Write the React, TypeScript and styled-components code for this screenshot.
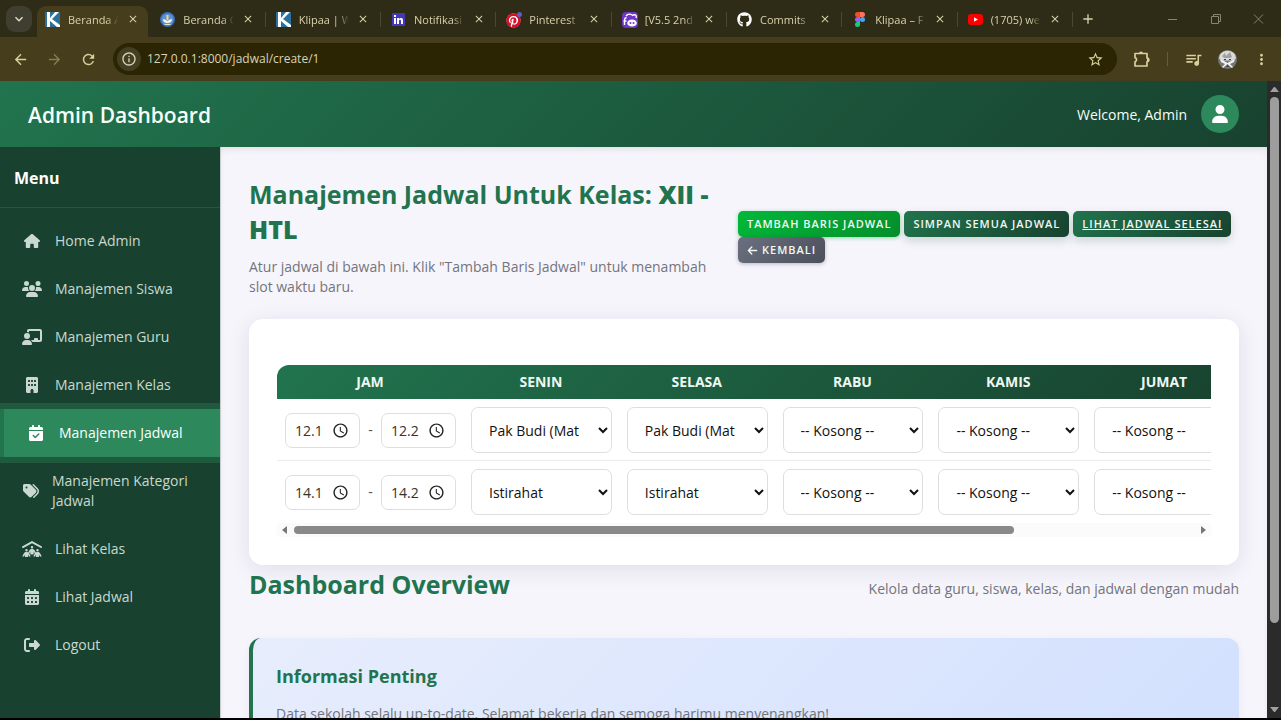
import React from "react";
import styled, { createGlobalStyle, css } from "styled-components";
import {
  FaHouse,
  FaUsers,
  FaChalkboardUser,
  FaBuilding,
  FaCalendarCheck,
  FaTags,
  FaPeopleRoof,
  FaCalendarDays,
  FaRightFromBracket,
  FaUser,
  FaArrowLeft,
  FaGithub,
  FaPinterest,
} from "react-icons/fa6";
import {
  MdArrowBack,
  MdArrowForward,
  MdRefresh,
  MdInfoOutline,
  MdStarBorder,
  MdQueueMusic,
  MdMoreVert,
  MdClose,
  MdAdd,
  MdKeyboardArrowDown,
  MdAccessTime,
} from "react-icons/md";

const green = "#21744e";
const dark = "#18422f";
const gradient = `linear-gradient(135deg, ${green} 0%, ${dark} 100%)`;

const Global = createGlobalStyle`
  * { box-sizing: border-box; }
  body {
    margin: 0;
    background: #000;
    font-family: "Open Sans", "Noto Sans", sans-serif;
    font-size: 14px;
    line-height: 20px;
  }
  button, input, select { font-family: inherit; }
  h1, h2, h3, p, ul { margin: 0; padding: 0; }
`;

const Shell = styled.div`
  display: flex;
  flex-direction: column;
  height: 100vh;
  padding-bottom: 2px;
  overflow: hidden;
`;

/* Browser frame */
const TabStrip = styled.div`
  display: flex;
  align-items: flex-end;
  flex: none;
  height: 37px;
  background: #2e2c16;
`;
const TabMenu = styled.button`
  display: grid;
  place-items: center;
  width: 26px;
  height: 26px;
  margin: 0 5px 5px 6px;
  padding: 0;
  border: 0;
  border-radius: 9px;
  background: #403e31;
  color: #e6e0bd;
  font-size: 16px;
`;
const Tabs = styled.div`
  display: flex;
  flex: 0 1 1038px;
  min-width: 0;
`;
const TabCell = styled.div`
  display: flex;
  align-items: center;
  flex: 1 1 0;
  min-width: 0;
  height: 31px;
`;
const TabBody = styled.div<{ $active?: boolean }>`
  display: flex;
  align-items: center;
  flex: 1;
  min-width: 0;
  height: 31px;
  padding: 0 8px;
  border-radius: 9px 9px 0 0;
  ${(p) =>
    p.$active &&
    css`
      background: #453d1b;
    `}
`;
const TabIcon = styled.span`
  display: grid;
  place-items: center;
  flex: none;
  width: 15px;
  height: 15px;
  margin: 0 8px 5px 0;
  font-size: 15px;
`;
const TabLabel = styled.span`
  flex: 1;
  min-width: 0;
  margin-bottom: 4px;
  overflow: hidden;
  white-space: nowrap;
  font-size: 11px;
  line-height: 16px;
  color: #d8d1ac;
  mask-image: linear-gradient(90deg, #000 68%, transparent 88%);
`;
const TabClose = styled.button`
  display: grid;
  place-items: center;
  flex: none;
  width: 15px;
  height: 15px;
  margin-bottom: 5px;
  padding: 0;
  border: 0;
  background: none;
  color: #d8d1ac;
  font-size: 12px;
`;
const TabDivider = styled.span<{ $hidden?: boolean }>`
  width: 1px;
  height: 15px;
  margin: 0 2px 5px 1px;
  background: ${(p) => (p.$hidden ? "transparent" : "#4c4632")};
`;
const NewTab = styled.button`
  display: grid;
  place-items: center;
  width: 26px;
  height: 26px;
  margin-bottom: 5px;
  padding: 0;
  border: 0;
  background: none;
  color: #d8d1ac;
  font-size: 16px;
`;
const WindowButtons = styled.div`
  display: flex;
  gap: 32px;
  margin: 0 17px 12px auto;
`;
const WindowButton = styled.button`
  display: grid;
  width: 11px;
  height: 12px;
  padding: 0;
  border: 0;
  background: none;
  color: #88836a;
`;
const Toolbar = styled.div`
  display: flex;
  align-items: center;
  flex: none;
  height: 44px;
  padding: 0 11px;
  background: #453d1b;
`;
const ToolButton = styled.button<{ $dim?: boolean }>`
  display: grid;
  place-items: center;
  flex: none;
  width: 18px;
  height: 26px;
  padding: 0;
  border: 0;
  background: none;
  color: ${(p) => (p.$dim ? "#857d52" : "#d8d19c")};
  font-size: 17px;
`;
const NavButtons = styled.div`
  display: flex;
  gap: 16px;
  margin-right: 16px;
`;
const AddressBar = styled.div`
  display: flex;
  align-items: center;
  flex: 1;
  min-width: 0;
  height: 32px;
  padding: 0 13px 0 4px;
  border-radius: 16px;
  background: #2b2504;
`;
const SiteInfo = styled.button`
  display: grid;
  place-items: center;
  flex: none;
  width: 24px;
  height: 24px;
  padding: 0;
  border: 0;
  border-radius: 50%;
  background: #443e22;
  color: #d9d3b8;
  font-size: 16px;
`;
const Address = styled.input`
  flex: 1;
  min-width: 0;
  padding: 0 6px;
  border: 0;
  outline: 0;
  background: none;
  color: #d9d3b8;
  font-size: 12px;
  line-height: 20px;
`;
const ToolRight = styled.div`
  display: flex;
  align-items: center;
  gap: 16px;
  margin-left: 16px;
`;
const ToolDivider = styled.span`
  width: 1px;
  height: 14px;
  background: #655d38;
`;

/* Page */
const Viewport = styled.div`
  display: flex;
  flex: 1;
  min-height: 0;
`;
const Page = styled.div`
  display: flex;
  flex-direction: column;
  flex: 1;
  min-width: 0;
`;
const Header = styled.header`
  display: flex;
  align-items: center;
  justify-content: space-between;
  flex: none;
  height: 66px;
  padding: 0 28px;
  background: ${gradient};
  color: #f4fff9;
`;
const Brand = styled.h1`
  padding-top: 2px;
  font-size: 21px;
  font-weight: 600;
  line-height: 30px;
`;
const Account = styled.div`
  display: flex;
  align-items: center;
  gap: 14px;
  font-weight: 500;
`;
const Welcome = styled.span`
  padding-top: 2px;
`;
const Avatar = styled.span`
  display: grid;
  place-items: center;
  width: 38px;
  height: 38px;
  border-radius: 50%;
  background: #2d895c;
  color: #fff;
  font-size: 18px;
`;
const Body = styled.div`
  display: flex;
  flex: 1;
  min-height: 0;
`;
const Sidebar = styled.nav`
  flex: none;
  width: 221px;
  overflow: hidden;
  border-right: 1px solid #c5cccb;
  background: ${dark};
  color: #c9d8d0;
`;
const MenuTitle = styled.h2`
  height: 61px;
  padding: 21px 14px 19px;
  border-bottom: 1px solid #2a5341;
  color: #fff;
  font-size: 16px;
  font-weight: 700;
  line-height: 20px;
`;
const MenuList = styled.ul`
  padding-top: 9px;
  list-style: none;
`;
const MenuLink = styled.a<{ $active?: boolean; $wide?: boolean }>`
  display: flex;
  align-items: center;
  gap: 13px;
  padding: ${(p) => (p.$wide ? "14px 20px 14px 22px" : "14px 0 14px 22px")};
  color: inherit;
  font-weight: 500;
  text-decoration: none;
  ${(p) =>
    p.$active &&
    css`
      border-left: 4px solid ${green};
      background: #2d895c;
      box-shadow: 0 -6px 0 #1f5a3e, 0 6px 0 #1f5a3e;
      color: #fff;
    `}
`;
const MenuIcon = styled.span<{ $narrow?: boolean }>`
  display: grid;
  place-items: center;
  flex: none;
  width: ${(p) => (p.$narrow ? 17 : 20)}px;
  font-size: 16px;
`;
const Main = styled.main`
  flex: 1;
  min-width: 0;
  overflow: hidden;
  padding: 30px 28px;
  background: #f6f5fc;
  box-shadow: inset 0 4px 8px -4px rgba(0, 0, 0, 0.15);
`;
const PageHead = styled.section`
  display: grid;
  grid-template-columns: minmax(0, 1fr) 501px;
  align-items: center;
  margin-bottom: 22px;
`;
const Title = styled.h2`
  color: ${green};
  font-size: 25px;
  font-weight: 700;
  line-height: 35px;
  strong { font-weight: 800; }
`;
const Muted = styled.p`
  color: #74747b;
`;
const HeadText = styled.div`
  padding-right: 18px;
  ${Muted} { margin-top: 10px; }
`;
const Actions = styled.div`
  display: flex;
  flex-wrap: wrap;
  gap: 0 4px;
`;
const tones = {
  bright: css`
    background: linear-gradient(135deg, #02b83a, #058f2b);
    box-shadow: 0 1px 4px rgba(0, 160, 50, 0.4);
  `,
  green: css`
    background: ${gradient};
    box-shadow: 0 4px 10px rgba(24, 66, 47, 0.18);
  `,
  gray: css`
    background: linear-gradient(135deg, #6b7080, #4c4f5b);
    box-shadow: 0 1px 4px rgba(40, 40, 60, 0.3);
  `,
};
const actionStyle = css<{ $tone: keyof typeof tones }>`
  display: inline-flex;
  align-items: center;
  gap: 4px;
  height: 26px;
  padding: 0 9px;
  border: 0;
  border-radius: 5px;
  color: #f1f8f4;
  font-size: 11px;
  font-weight: 600;
  line-height: 16px;
  letter-spacing: 1px;
  text-transform: uppercase;
  white-space: nowrap;
  ${(p) => tones[p.$tone]}
`;
const ActionButton = styled.button`
  ${actionStyle}
`;
const ActionLink = styled.a`
  ${actionStyle}
`;
const Card = styled.section`
  padding: 46px 28px 28px;
  border-radius: 14px;
  background: #fff;
  box-shadow: 0 4px 22px rgba(30, 30, 60, 0.1);
`;
const TableClip = styled.div`
  overflow: hidden;
  border-radius: 12px 0 0 0;
`;
const Table = styled.table`
  width: 965px;
  border-collapse: separate;
  border-spacing: 0;
  table-layout: fixed;
  color: #555;
`;
const HeadRow = styled.thead`
  background: ${gradient};
`;
const Th = styled.th<{ $time?: boolean }>`
  width: ${(p) => (p.$time ? "186px" : "auto")};
  height: 34px;
  padding: 0;
  color: #eef7f2;
  font-size: 14px;
  font-weight: 700;
`;
const Td = styled.td<{ $last?: boolean }>`
  padding: ${(p) => (p.$last ? "8px 7px 8px 8px" : "8px 7px 7px 8px")};
  border-bottom: ${(p) => (p.$last ? "0" : "1px solid #ececee")};
`;
const TimeRange = styled.div`
  display: flex;
  align-items: center;
  justify-content: space-between;
`;
const TimeField = styled.label`
  display: flex;
  align-items: center;
  width: 75px;
  height: 35px;
  padding: 0 10px 0 9px;
  border: 1px solid #dededf;
  border-radius: 7px;
  color: #222;
  font-size: 17px;
`;
const TimeInput = styled.input`
  flex: 1;
  min-width: 0;
  width: 30px;
  padding: 0;
  border: 0;
  outline: 0;
  background: none;
  color: #333;
  font-size: 14px;
`;
const Select = styled.select`
  display: block;
  width: 100%;
  height: 46px;
  padding: 0 0 0 13px;
  border: 1px solid #dededf;
  border-radius: 7px;
  background: #fff;
  color: #111;
  font-size: 14px;
`;
const HScroll = styled.div`
  display: flex;
  align-items: center;
  height: 14px;
  padding: 0 5px;
  background: #fbfbfb;
`;
const HTrack = styled.div`
  flex: 1;
  margin: 0 7px;
`;
const HThumb = styled.div`
  width: 80%;
  height: 8px;
  border-radius: 4px;
  background: #898989;
`;
const Overview = styled.section`
  display: flex;
  align-items: flex-start;
  justify-content: space-between;
  margin-bottom: 36px;
  padding-top: 2px;
  ${Muted} { margin-top: 12px; }
`;
const Info = styled.section`
  padding: 24px 23px;
  border-left: 4px solid ${green};
  border-radius: 12px;
  background: linear-gradient(135deg, #e7edfc 0%, #d2e0fe 100%);
  box-shadow: 0 2px 10px rgba(30, 30, 60, 0.05);
  ${Muted} { margin-top: 14px; }
`;
const InfoTitle = styled.h3`
  color: ${green};
  font-size: 18px;
  font-weight: 700;
  line-height: 28px;
`;
const VScroll = styled.div`
  display: flex;
  flex-direction: column;
  align-items: center;
  flex: none;
  width: 14px;
  padding: 6px 0;
  background: #2b2b2b;
`;
const VTrack = styled.div`
  flex: 1;
  margin: 5px 0;
`;
const VThumb = styled.div`
  width: 9px;
  height: 87%;
  border-radius: 5px;
  background: #9d9d9d;
`;

const Arrow = ({ d, color, w, h }: { d: string; color: string; w: number; h: number }) => (
  <svg width={w} height={h} viewBox={`0 0 ${w} ${h}`} aria-hidden="true">
    <path d={d} fill={color} />
  </svg>
);

const KIcon = () => (
  <svg width="15" height="15" viewBox="0 0 15 15" aria-hidden="true">
    <rect width="15" height="15" rx="1" fill="#2b709e" />
    <path d="M2 0h3v6l5-6h4L7 7l8 6v2h-3L5 9v6H2z" fill="#fff" />
  </svg>
);
const SchoolIcon = () => (
  <svg width="15" height="15" viewBox="0 0 15 15" aria-hidden="true">
    <circle cx="7.500" cy="7.500" r="7.500" fill="#3a6fbd" />
    <circle cx="7.500" cy="7.500" r="6" fill="#5f90cf" />
    <path d="M3 7c2 0 3 1 4.500 2C9 8 10 7 12 7c0 3-2 4-4.500 4S3 10 3 7z" fill="#f4f1dc" />
    <path d="M6.500 3h2v5h-2z" fill="#f0d98a" />
    <path d="M4.500 12h6v1h-6z" fill="#e8e4cc" />
  </svg>
);
const LinkedinIcon = () => (
  <svg width="13" height="13" viewBox="0 0 13 13" aria-hidden="true">
    <rect width="13" height="13" fill="#4338b8" />
    <path d="M2 5h2v6H2zM2 2h2v2H2zM5 5h2v1c1-1.600 4-1.400 4 1v4H9V8c0-2-2-1.600-2 0v3H5z" fill="#fff" />
  </svg>
);
const PinIcon = () => (
  <svg width="16" height="16" viewBox="0 0 16 16" aria-hidden="true">
    <circle cx="7.500" cy="8.500" r="7" fill="#fff" />
    <g transform="translate(0 1) scale(.03)">
      <FaPinterest size={500} color="#d3122a" />
    </g>
    <circle cx="13.500" cy="2.500" r="2.500" fill="#5b5fc0" />
  </svg>
);
const PurpleIcon = () => (
  <svg width="16" height="16" viewBox="0 0 16 16" aria-hidden="true">
    <rect width="16" height="16" rx="4" fill="#6f35c8" />
    <path d="M2.500 13V8q0-2 2-2.500M1.500 9h3M4 4c2-3 6-2 7 0M11 3c3-1 4 1 3 3" fill="none" stroke="#fff" strokeWidth="1.400" />
    <ellipse cx="10" cy="11" rx="4.800" ry="3.600" fill="#fff" />
    <circle cx="8.500" cy="11" r="1" fill="#6f35c8" />
    <circle cx="11.500" cy="11" r="1" fill="#6f35c8" />
  </svg>
);
const FigmaIcon = () => (
  <svg width="10" height="15" viewBox="0 0 10 15" aria-hidden="true">
    <path d="M5 0H2.500a2.500 2.500 0 0 0 0 5H5z" fill="#f24e1e" />
    <path d="M5 0h2.500a2.500 2.500 0 0 1 0 5H5z" fill="#ff7262" />
    <path d="M5 5H2.500a2.500 2.500 0 0 0 0 5H5z" fill="#a259ff" />
    <circle cx="7.500" cy="7.500" r="2.500" fill="#3ba9f5" />
    <path d="M5 10H2.500A2.500 2.500 0 1 0 5 12.500z" fill="#0fcf83" />
  </svg>
);
const YoutubeIcon = () => (
  <svg width="15" height="11" viewBox="0 0 15 11" aria-hidden="true">
    <rect width="15" height="11" rx="3" fill="#f00" />
    <path d="M6 3.300v4.400l4-2.200z" fill="#fff" />
  </svg>
);
const PuzzleIcon = () => (
  <svg width="18" height="18" viewBox="0 0 18 18" aria-hidden="true">
    <path
      d="M2 3.500h12V8a1.800 1.800 0 0 1 0 3.600V16H2v-4.200a2.200 2.200 0 0 0 0-4.200z"
      fill="none"
      stroke="currentColor"
      strokeWidth="1.700"
      strokeLinejoin="round"
    />
    <path d="M6 3.500a2 2 0 0 1 4 0zM14 7.700a2 2 0 0 1 0 4z" fill="currentColor" />
  </svg>
);
const ProfileIcon = () => (
  <svg width="19" height="19" viewBox="0 0 19 19" aria-hidden="true">
    <circle cx="9.500" cy="9.500" r="9.500" fill="#777" />
    <path d="M2 4.500a9.500 9.500 0 0 1 15 0l1 4-4 2H4L1 8.500z" fill="#dadada" />
    <path d="M4 6l3-3 1 3 4-4 2 5-2 1H6zM9 8l1-3 1 3z" fill="#a0a0a0" />
    <path d="M2 9l4 2 3.500 2L13 11l4-2-1 3-4 2 3 3-1 1-4.500-4L5 18l-1-1 3-3-4-2z" fill="#f4f4f4" />
    <path d="M6 9h2v1H6zM11 9h2v1h-2zM8 17l1.500-2 1.500 2z" fill="#3c3c3c" />
  </svg>
);

const tabs = [
  { label: "Beranda A", icon: <KIcon /> },
  { label: "Beranda G", icon: <SchoolIcon /> },
  { label: "Klipaa | W", icon: <KIcon /> },
  { label: "Notifikasi", icon: <LinkedinIcon /> },
  { label: "Pinterest", icon: <PinIcon /> },
  { label: "[V5.5 2nd", icon: <PurpleIcon /> },
  { label: "Commits", icon: <FaGithub color="#fff" /> },
  { label: "Klipaa – F", icon: <FigmaIcon /> },
  { label: "(1705) we", icon: <YoutubeIcon /> },
];

const menu = [
  { label: "Home Admin", icon: <FaHouse /> },
  { label: "Manajemen Siswa", icon: <FaUsers size={20} /> },
  { label: "Manajemen Guru", icon: <FaChalkboardUser size={20} /> },
  { label: "Manajemen Kelas", icon: <FaBuilding /> },
  { label: "Manajemen Jadwal", icon: <FaCalendarCheck />, active: true },
  { label: "Manajemen Kategori Jadwal", icon: <FaTags />, wide: true },
  { label: "Lihat Kelas", icon: <FaPeopleRoof size={20} /> },
  { label: "Lihat Jadwal", icon: <FaCalendarDays /> },
  { label: "Logout", icon: <FaRightFromBracket /> },
];

const days = ["SENIN", "SELASA", "RABU", "KAMIS", "JUMAT"];
const rows = [
  { from: "12.1", to: "12.2", slots: ["Pak Budi (Mat", "Pak Budi (Mat", "-- Kosong --", "-- Kosong --", "-- Kosong --"] },
  { from: "14.1", to: "14.2", slots: ["Istirahat", "Istirahat", "-- Kosong --", "-- Kosong --", "-- Kosong --"] },
];

const Time = ({ value, label }: { value: string; label: string }) => (
  <TimeField>
    <TimeInput defaultValue={value} aria-label={label} />
    <MdAccessTime />
  </TimeField>
);

export default function App() {
  return (
    <Shell>
      <Global />
      <TabStrip>
        <TabMenu aria-label="Search tabs"><MdKeyboardArrowDown /></TabMenu>
        <Tabs>
          {tabs.map((t, i) => (
            <TabCell key={t.label}>
              <TabBody $active={i === 0}>
                <TabIcon>{t.icon}</TabIcon>
                <TabLabel>{t.label}</TabLabel>
                <TabClose aria-label="Close tab"><MdClose /></TabClose>
              </TabBody>
              <TabDivider $hidden={i === 0} />
            </TabCell>
          ))}
        </Tabs>
        <NewTab aria-label="New tab"><MdAdd /></NewTab>
        <WindowButtons>
          <WindowButton aria-label="Minimize">
            <svg width="11" height="12" viewBox="0 0 11 12"><path d="M1 6.500h9" stroke="currentColor" /></svg>
          </WindowButton>
          <WindowButton aria-label="Restore">
            <svg width="11" height="12" viewBox="0 0 11 12"><path d="M1.500 3.500h7v7h-7zM3.500 3V1.500h7v7H9" fill="none" stroke="currentColor" /></svg>
          </WindowButton>
          <WindowButton aria-label="Close">
            <svg width="11" height="12" viewBox="0 0 11 12"><path d="M1 1.500l9 9m0-9l-9 9" stroke="currentColor" /></svg>
          </WindowButton>
        </WindowButtons>
      </TabStrip>
      <Toolbar>
        <NavButtons>
          <ToolButton aria-label="Back"><MdArrowBack /></ToolButton>
          <ToolButton $dim aria-label="Forward"><MdArrowForward /></ToolButton>
          <ToolButton aria-label="Reload"><MdRefresh /></ToolButton>
        </NavButtons>
        <AddressBar>
          <SiteInfo aria-label="Site information"><MdInfoOutline /></SiteInfo>
          <Address aria-label="Address" defaultValue="127.0.0.1:8000/jadwal/create/1" />
          <ToolButton aria-label="Bookmark"><MdStarBorder /></ToolButton>
        </AddressBar>
        <ToolRight>
          <ToolButton aria-label="Extensions"><PuzzleIcon /></ToolButton>
          <ToolDivider />
          <ToolButton aria-label="Media"><MdQueueMusic size={19} /></ToolButton>
          <ToolButton aria-label="Profile"><ProfileIcon /></ToolButton>
          <ToolButton aria-label="More"><MdMoreVert /></ToolButton>
        </ToolRight>
      </Toolbar>

      <Viewport>
        <Page>
          <Header>
            <Brand>Admin Dashboard</Brand>
            <Account>
              <Welcome>Welcome, Admin</Welcome>
              <Avatar><FaUser /></Avatar>
            </Account>
          </Header>
          <Body>
            <Sidebar>
              <MenuTitle>Menu</MenuTitle>
              <MenuList>
                {menu.map((m) => (
                  <li key={m.label}>
                    <MenuLink href="#" $active={m.active} $wide={m.wide}>
                      <MenuIcon $narrow={m.wide}>{m.icon}</MenuIcon>
                      <span>{m.label}</span>
                    </MenuLink>
                  </li>
                ))}
              </MenuList>
            </Sidebar>
            <Main>
              <PageHead>
                <HeadText>
                  <Title>Manajemen Jadwal Untuk Kelas: <strong>XII - HTL</strong></Title>
                  <Muted>Atur jadwal di bawah ini. Klik "Tambah Baris Jadwal" untuk menambah slot waktu baru.</Muted>
                </HeadText>
                <Actions>
                  <ActionButton $tone="bright">Tambah Baris Jadwal</ActionButton>
                  <ActionButton $tone="green">Simpan Semua Jadwal</ActionButton>
                  <ActionLink $tone="green" href="#">Lihat Jadwal Selesai</ActionLink>
                  <ActionButton $tone="gray"><FaArrowLeft />Kembali</ActionButton>
                </Actions>
              </PageHead>
              <Card>
                <TableClip>
                  <Table>
                    <HeadRow>
                      <tr>
                        <Th $time>JAM</Th>
                        {days.map((d) => <Th key={d}>{d}</Th>)}
                      </tr>
                    </HeadRow>
                    <tbody>
                      {rows.map((r, i) => {
                        const last = i === rows.length - 1;
                        return (
                          <tr key={r.from}>
                            <Td $last={last}>
                              <TimeRange>
                                <Time value={r.from} label="Jam mulai" />
                                <span>-</span>
                                <Time value={r.to} label="Jam selesai" />
                              </TimeRange>
                            </Td>
                            {r.slots.map((s, j) => (
                              <Td key={days[j]} $last={last}>
                                <Select aria-label={days[j]}><option>{s}</option></Select>
                              </Td>
                            ))}
                          </tr>
                        );
                      })}
                    </tbody>
                  </Table>
                </TableClip>
                <HScroll>
                  <Arrow w={5} h={8} d="M5 0v8L0 4z" color="#777" />
                  <HTrack><HThumb /></HTrack>
                  <Arrow w={5} h={8} d="M0 0v8l5-4z" color="#777" />
                </HScroll>
              </Card>
              <Overview>
                <Title>Dashboard Overview</Title>
                <Muted>Kelola data guru, siswa, kelas, dan jadwal dengan mudah</Muted>
              </Overview>
              <Info>
                <InfoTitle>Informasi Penting</InfoTitle>
                <Muted>Data sekolah selalu up-to-date. Selamat bekerja dan semoga harimu menyenangkan!</Muted>
              </Info>
            </Main>
          </Body>
        </Page>
        <VScroll>
          <Arrow w={9} h={5} d="M0 5h9L5 0H4z" color="#a0a0a0" />
          <VTrack><VThumb /></VTrack>
          <Arrow w={9} h={5} d="M0 0h9L5 5H4z" color="#a0a0a0" />
        </VScroll>
      </Viewport>
    </Shell>
  );
}
